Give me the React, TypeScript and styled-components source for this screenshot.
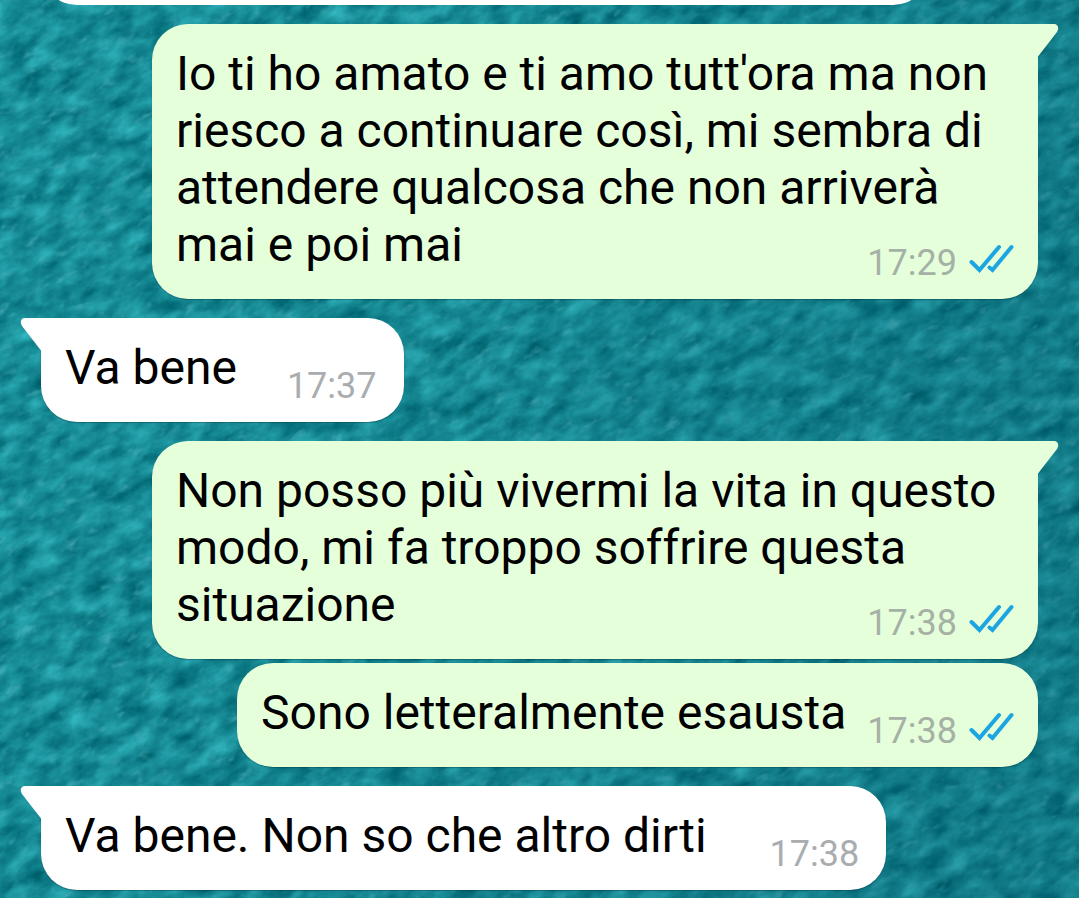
import React from 'react';
import styled, { createGlobalStyle, css } from 'styled-components';

const GlobalStyle = createGlobalStyle`
  *, *::before, *::after { box-sizing: border-box; }
  body { margin: 0; background: #12808f; font-family: Roboto, "Liberation Sans", sans-serif; }
`;

const Screen = styled.main`
  position: relative;
  min-height: 100vh;
  overflow: hidden;
`;

const Wallpaper = styled.svg`
  position: absolute;
  inset: 0;
  width: 100%;
  height: 100%;
`;

const Thread = styled.ol`
  position: relative;
  display: flex;
  flex-direction: column;
  list-style: none;
  margin: 0;
  padding: 0 41px 8px;
`;

const Row = styled.li<{ $out?: boolean; $grouped?: boolean }>`
  display: flex;
  justify-content: ${p => (p.$out ? 'flex-end' : 'flex-start')};
  margin-top: ${p => (p.$grouped ? 4 : 19)}px;
`;

const ClippedRow = styled.li`
  display: flex;
  align-items: flex-end;
  height: 5px;
  overflow: hidden;
`;

const Bubble = styled.article<{ $out?: boolean; $tail?: boolean }>`
  position: relative;
  display: flow-root;
  max-width: 886px;
  padding: 21px ${p => (p.$out ? 24 : 27)}px 15px 24px;
  border-radius: 36px;
  background: ${p => (p.$out ? '#e5ffdb' : '#ffffff')};
  box-shadow: 0 1px 1px rgba(0, 40, 50, 0.35);
  font-size: 48px;
  line-height: 57px;
  color: #000000;
  ${p => p.$tail && (p.$out
    ? css`border-top-right-radius: 0;`
    : css`border-top-left-radius: 0;`)}
`;

const PreviousBubble = styled.div`
  flex: 0 1 888px;
  height: 104px;
  border-radius: 36px;
  background: #ffffff;
`;

const Tail = styled.svg<{ $out?: boolean }>`
  position: absolute;
  top: 0;
  width: 22px;
  height: 34px;
  fill: ${p => (p.$out ? '#e5ffdb' : '#ffffff')};
  ${p => (p.$out ? css`left: calc(100% - 1px);` : css`right: calc(100% - 1px); transform: scaleX(-1);`)}
`;

const Meta = styled.span<{ $out?: boolean; $gap: number }>`
  float: right;
  display: flex;
  align-items: flex-start;
  gap: 12px;
  margin: 26px 0 0 ${p => p.$gap}px;
  font-size: 36px;
  line-height: 42px;
  color: ${p => (p.$out ? '#a6b1a6' : '#a9adb0')};
`;

const Ticks = styled.svg`
  width: 45px;
  height: 32px;
  fill: none;
  stroke: #1ba5e1;
  stroke-width: 4;
  stroke-linecap: round;
`;

interface Message {
  text: string;
  time: string;
  out?: boolean;
  grouped?: boolean;
  gap: number;
}

const messages: Message[] = [
  { text: "Io ti ho amato e ti amo tutt'ora ma non riesco a continuare così, mi sembra di attendere qualcosa che non arriverà mai e poi mai", time: '17:29', out: true, gap: 21 },
  { text: 'Va bene', time: '17:37', gap: 50 },
  { text: 'Non posso più vivermi la vita in questo modo, mi fa troppo soffrire questa situazione', time: '17:38', out: true, gap: 21 },
  { text: 'Sono letteralmente esausta', time: '17:38', out: true, grouped: true, gap: 21 },
  { text: 'Va bene. Non so che altro dirti', time: '17:38', gap: 63 },
];

const ReadTicks = () => (
  <Ticks viewBox="0 0 45 32" role="img" aria-label="Letto">
    <path d="M2.5 20L10.5 28L30 5" />
    <path d="M20.5 25.5L23.5 28L42.5 5" />
  </Ticks>
);

const ChatMessage = ({ text, time, out, grouped, gap }: Message) => (
  <Row $out={out} $grouped={grouped}>
    <Bubble $out={out} $tail={!grouped}>
      {!grouped && (
        <Tail $out={out} viewBox="0 0 22 34" aria-hidden="true">
          <path d="M0 0H17C21 0 22.5 4 20 8L1 32.5V34H0Z" />
        </Tail>
      )}
      <span>{text}</span>
      <Meta $out={out} $gap={gap}>
        <time>{time}</time>
        {out && <ReadTicks />}
      </Meta>
    </Bubble>
  </Row>
);

const App = () => (
  <>
    <GlobalStyle />
    <Screen>
      <Wallpaper aria-hidden="true">
        <defs>
          <filter id="plaster" x="0" y="0" width="100%" height="100%" colorInterpolationFilters="sRGB">
            <feTurbulence type="fractalNoise" baseFrequency="0.036 0.064" numOctaves="4" seed="21" />
            <feColorMatrix
              values="0.26 0.1 0 0 -0.09
                      0.42 0.14 0 0 0.27
                      0.4 0.14 0 0 0.32
                      0 0 0 0 1"
            />
            <feGaussianBlur stdDeviation="0.6" />
          </filter>
          <filter id="glints" x="0" y="0" width="100%" height="100%" colorInterpolationFilters="sRGB">
            <feTurbulence type="fractalNoise" baseFrequency="0.05 0.09" numOctaves="3" seed="5" />
            <feColorMatrix
              values="0 0 0 0 0.3
                      0 0 0 0 0.7
                      0 0 0 0 0.74
                      2.6 0 0 0 -1.65"
            />
            <feGaussianBlur stdDeviation="0.6" />
          </filter>
          <linearGradient id="shade" x1="0" y1="0" x2="1" y2="0.25">
            <stop offset="0" stopColor="#00485a" stopOpacity="0" />
            <stop offset="0.5" stopColor="#00485a" stopOpacity="0.08" />
            <stop offset="1" stopColor="#00485a" stopOpacity="0.26" />
          </linearGradient>
        </defs>
        <g transform="rotate(-30)">
          <rect x="-900" y="-100" width="2400" height="2000" filter="url(#plaster)" />
          <rect x="-900" y="-100" width="2400" height="2000" filter="url(#glints)" />
        </g>
        <rect width="100%" height="100%" fill="url(#shade)" />
      </Wallpaper>
      <Thread>
        <ClippedRow><PreviousBubble /></ClippedRow>
        {messages.map(message => <ChatMessage key={message.text} {...message} />)}
      </Thread>
    </Screen>
  </>
);

export default App;
